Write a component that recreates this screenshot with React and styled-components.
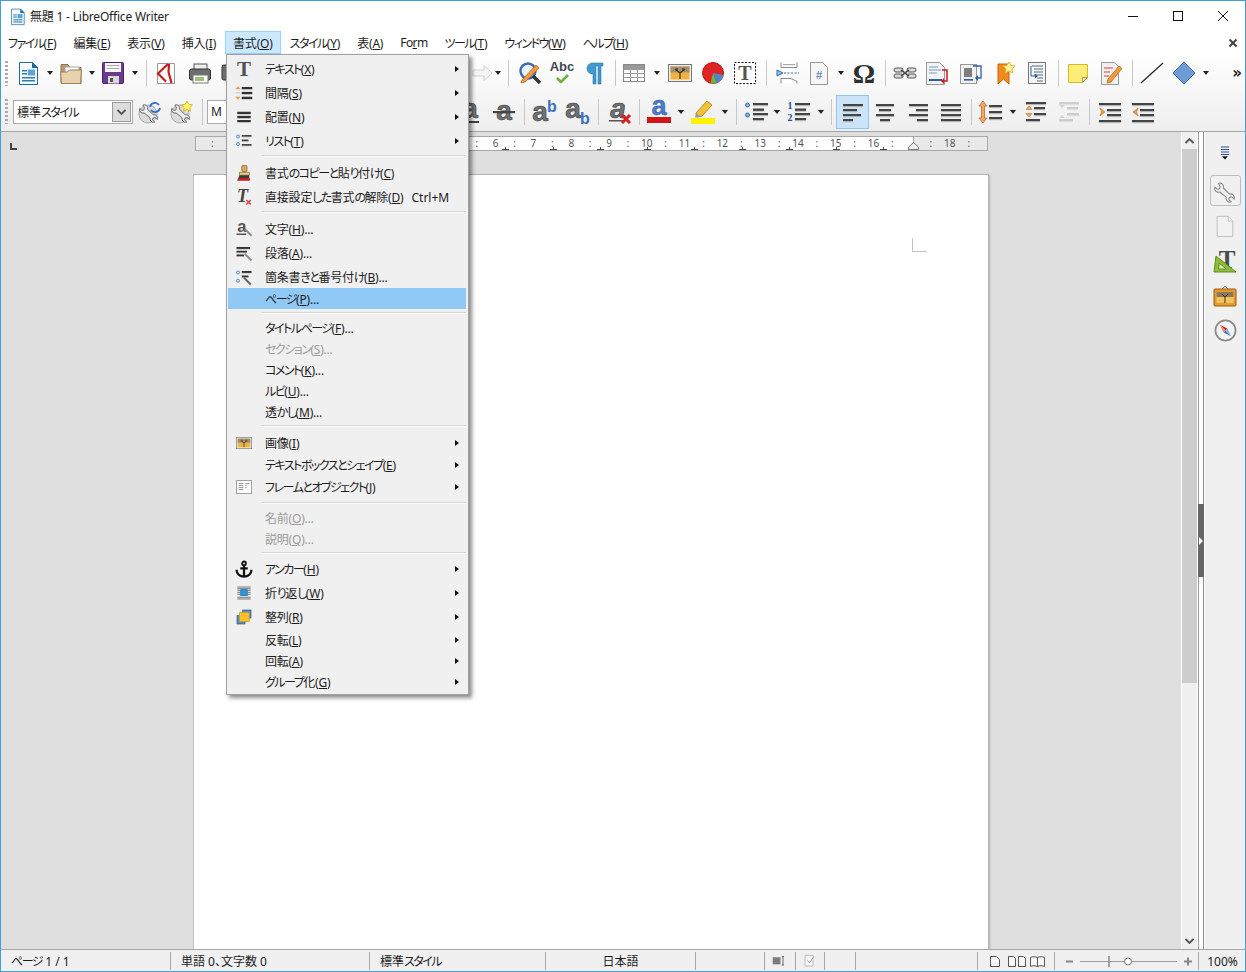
import React from 'react'
import styled, { createGlobalStyle } from 'styled-components'

const GlobalStyle = createGlobalStyle`
  html, body {
    margin: 0;
    padding: 0;
    background: #fff;
  }
  body {
    font-family: "Noto Sans", "Noto Sans CJK JP", sans-serif;
    font-size: 12px;
    font-feature-settings: "palt";
    color: #1c1c1c;
  }
`

const Window = styled.div`
  position: relative;
  box-sizing: border-box;
  width: 1246px;
  height: 972px;
  border: 1px solid #3f9fd8;
  display: flex;
  flex-direction: column;
  overflow: hidden;
  background: #fff;
`

const TitleBar = styled.div`
  height: 30px;
  display: flex;
  align-items: center;
  padding-left: 8px;
  flex: none;
`

const TitleText = styled.span`
  flex: 1;
  margin: 0 0 1px 4px;
  letter-spacing: -0.2px;
`

const WinButton = styled.div`
  width: 45px;
  height: 30px;
  display: flex;
  align-items: center;
  justify-content: center;
`

const MenuBar = styled.div`
  height: 23px;
  margin-left: -1.5px;
  display: flex;
  align-items: stretch;
  flex: none;
`

const MenuTitle = styled.div`
  box-sizing: border-box;
  display: flex;
  align-items: center;
  padding: 0 7.5px;
  white-space: nowrap;
  letter-spacing: -0.2px;
  border: 1px solid ${p => (p.$open ? '#99d1ff' : 'transparent')};
  background: ${p => (p.$open ? '#cce8ff' : 'transparent')};
`

const LatinTitle = styled.span`
  letter-spacing: -0.6px;
`

const DocClose = styled.div`
  margin-left: auto;
  width: 24px;
  display: flex;
  align-items: center;
  justify-content: center;
`

const ToolArea = styled.div`
  flex: none;
  background: linear-gradient(#ffffff, #eeeeee);
  border-bottom: 1px solid #a6a6a6;
`

const ToolRow = styled.div`
  height: ${p => p.$h}px;
  display: flex;
  align-items: center;
  padding-left: 4px;
`

const Grip = styled.div`
  width: 3px;
  height: 25px;
  margin-right: ${p => p.$mr}px;
  flex: none;
  background: repeating-linear-gradient(#aaaaaa 0 2px, transparent 2px 4px);
`

const Tool = styled.div`
  box-sizing: border-box;
  width: ${p => p.$w}px;
  height: ${p => (p.$active ? 34 : 30)}px;
  flex: none;
  display: flex;
  align-items: center;
  justify-content: center;
  background: ${p => (p.$active ? '#cce4f8' : 'transparent')};
  border: 1px solid ${p => (p.$active ? '#8fc6f2' : 'transparent')};
`

const DropArrow = styled.div`
  width: ${p => p.$w}px;
  flex: none;
  display: flex;
  justify-content: center;
  &::before {
    content: '';
    border-left: 3.5px solid transparent;
    border-right: 3.5px solid transparent;
    border-top: 4px solid #222;
  }
`

const ToolSep = styled.div`
  width: ${p => p.$w}px;
  height: 26px;
  flex: none;
  display: flex;
  justify-content: center;
  &::before {
    content: '';
    width: 1px;
    background: #c8c8c8;
  }
`

const Gap = styled.div`
  width: ${p => p.$w}px;
  flex: none;
`

const More = styled.div`
  margin-left: auto;
  margin-right: 3px;
  font: 700 15px "DejaVu Sans", sans-serif;
  text-align: right;
`

const Combo = styled.div`
  box-sizing: border-box;
  width: ${p => p.$w}px;
  height: 24px;
  flex: none;
  display: flex;
  align-items: center;
  padding-left: 3px;
  background: #fff;
  border: 1px solid #ababab;
`

const ComboText = styled.span`
  flex: 1;
`

const ComboButton = styled.div`
  box-sizing: border-box;
  width: 19px;
  height: 20px;
  margin-right: 1px;
  display: flex;
  align-items: center;
  justify-content: center;
  background: #dcdcdc;
  border: 1px solid #9a9a9a;
`

const Workspace = styled.div`
  flex: 1;
  min-height: 0;
  display: flex;
`

const DocColumn = styled.div`
  width: 1180px;
  flex: none;
  display: flex;
  flex-direction: column;
  background: #dfdfdf;
  border-right: 1px solid #fff;
`

const RulerRow = styled.div`
  box-sizing: border-box;
  height: 20px;
  flex: none;
  display: flex;
  align-items: flex-start;
  padding-top: 4px;
`

const RulerCorner = styled.div`
  width: 5px;
  height: 5px;
  margin: 7px 178px 0 9px;
  border-left: 2px solid #444;
  border-bottom: 2px solid #444;
  flex: none;
`

const Ruler = styled.div`
  position: relative;
  box-sizing: border-box;
  height: 15px;
  display: flex;
  border: 1px solid #a8a8a8;
  border-width: 1px 1px 1px 0;
  font: 10px "Noto Sans", sans-serif;
  color: #555;
`

const RulerGray = styled.div`
  box-sizing: border-box;
  width: 74px;
  display: flex;
  justify-content: ${p => (p.$end ? 'flex-end' : 'flex-start')};
  padding: ${p => (p.$end ? '0 9.45px 0 0' : '0 0 0 7.5px')};
  background: #e9e9e9;
  border-left: 1px solid #a8a8a8;
  overflow: hidden;
`

const RulerWhite = styled.div`
  position: relative;
  box-sizing: border-box;
  width: 644px;
  display: flex;
  padding-left: 9.45px;
  background: #fff;

  &::after {
    content: '';
    position: absolute;
    left: 0;
    right: 0;
    bottom: 0;
    height: 3px;
    background: repeating-linear-gradient(90deg, #444 0 1px, transparent 1px 47.25px);
  }
  &::before {
    content: '';
    position: absolute;
    left: 0;
    right: 0;
    bottom: 0;
    height: 1px;
    background: repeating-linear-gradient(90deg, #444 0 4px, transparent 4px 44.25px, #444 44.25px 47.25px);
  }
`

const RulerTick = styled.span`
  width: 18.9px;
  flex: none;
  text-align: center;
  line-height: 13px;
  white-space: nowrap;
`

const IndentMark = styled.svg`
  position: absolute;
  left: 639px;
  top: 1px;
`

const DocArea = styled.div`
  flex: 1;
  min-height: 0;
  overflow: hidden;
  padding: 22px 0 0 192px;
`

const Page = styled.div`
  position: relative;
  box-sizing: border-box;
  width: 796px;
  height: 1100px;
  background: #fff;
  border-top: 1px solid #b4b4b4;
  border-left: 1px solid #c4c4c4;
  border-right: 1px solid #b4b4b4;
  box-shadow: 1px 1px 2px rgba(0, 0, 0, 0.2);
`

const CropMark = styled.div`
  position: absolute;
  left: 718px;
  top: 63px;
  width: 14px;
  height: 13px;
  border-left: 1px solid #c4c4c4;
  border-bottom: 1px solid #c4c4c4;
`

const Scroll = styled.div`
  width: 15px;
  flex: none;
  display: flex;
  flex-direction: column;
  padding-top: 1px;
  background: #f0f0f0;
  border-right: 1px solid #fff;
`

const ScrollBtn = styled.div`
  height: 16px;
  flex: none;
  display: flex;
  align-items: center;
  justify-content: center;
`

const ScrollThumb = styled.div`
  height: 534px;
  flex: none;
  background: #cdcdcd;
`

const ScrollTrack = styled.div`
  flex: 1;
`

const DeckStrip = styled.div`
  width: 4px;
  flex: none;
  display: flex;
  flex-direction: column;
  border-left: 1px solid #9a9a9a;
  border-right: 1px solid #8c8c8c;
  padding-top: 372px;
  background: #fff;
`

const DeckHandle = styled.div`
  height: 73px;
  margin: 0 -1px;
  background: #666;
  display: flex;
  align-items: center;
  justify-content: center;
  &::before {
    content: '';
    border-left: 4px solid #fff;
    border-top: 4px solid transparent;
    border-bottom: 4px solid transparent;
  }
`

const SideBar = styled.div`
  flex: 1;
  background: #f0f0f0;
  border-left: 1px solid #fff;
  display: flex;
  flex-direction: column;
  align-items: center;
  padding-top: 8px;
`

const SideTab = styled.div`
  box-sizing: border-box;
  width: ${p => (p.$boxed ? 31 : 40)}px;
  height: ${p => p.$h}px;
  margin: ${p => p.$m || 0};
  flex: none;
  display: flex;
  align-items: center;
  justify-content: center;
  ${p => (p.$boxed ? 'border: 1px solid #bdbdbd; border-radius: 3px;' : '')}
`

const StatusBar = styled.div`
  box-sizing: border-box;
  height: 22px;
  padding-top: 1px;
  flex: none;
  display: flex;
  align-items: center;
  background: #f0f0f0;
  border-top: 1px solid #a6a6a6;
`

const StatusCell = styled.div`
  box-sizing: border-box;
  width: ${p => p.$w}px;
  height: 18px;
  flex: none;
  display: flex;
  align-items: center;
  justify-content: ${p => p.$align || 'flex-start'};
  padding-left: ${p => p.$pad || 0}px;
  border-right: ${p => (p.$last ? 'none' : '1px solid #a6a6a6')};
  white-space: pre;
`

const Menu = styled.div`
  position: absolute;
  left: 225px;
  top: 53px;
  box-sizing: border-box;
  width: 243px;
  padding: 2px;
  padding-left: 1px;
  background: #f0f0f0;
  border: 1px solid #a0a0a0;
  box-shadow: 3px 3px 4px rgba(0, 0, 0, 0.45);
`

const MenuRow = styled.div`
  height: ${p => p.$h}px;
  display: flex;
  align-items: center;
  letter-spacing: -0.2px;
  color: ${p => (p.$disabled ? '#9b9b9b' : 'inherit')};
  background: ${p => (p.$active ? '#90c8f6' : 'transparent')};
`

const MenuIcon = styled.div`
  width: 32px;
  margin-right: 5px;
  flex: none;
  display: flex;
  align-items: center;
  justify-content: center;
`

const Shortcut = styled.span`
  margin-left: 8px;
  letter-spacing: 0;
`

const SubArrow = styled.span`
  margin-left: auto;
  margin-right: 7px;
  border-left: 4px solid #111;
  border-top: 3px solid transparent;
  border-bottom: 3px solid transparent;
`

const MenuSep = styled.div`
  height: 1px;
  margin: ${p => p.$t}px 0 ${p => p.$b}px 33px;
  background: #d7d7d7;
  box-shadow: 0 1px 0 #fbfbfb;
`

const Kana = styled.span`
  letter-spacing: -1.5px;
`

const Glyph = styled.svg`
  display: block;
  flex: none;
  overflow: visible;
`

// the kana of the UI font are much narrower than the kanji
const Jp = ({ children }) =>
  children.split(/([\u3040-\u30ff]+)/).map((s, i) => (i % 2 ? <Kana key={i}>{s}</Kana> : s))

const T = ({ x = 12, y = 20, s = 22, f = '#555a5e', w = 700, fam = 'Liberation Sans', it, children, ...rest }) => (
  <text
    x={x}
    y={y}
    fontSize={s}
    fill={f}
    fontWeight={w}
    fontFamily={`"${fam}", sans-serif`}
    fontStyle={it ? 'italic' : 'normal'}
    textAnchor="middle"
    {...rest}
  >
    {children}
  </text>
)

const BigA = props => <T s={28} f="#6d7276" stroke="#3a3a3a" strokeWidth=".6" {...props}>a</T>

const bars = (rows, c = '#444', h = 2.4) =>
  rows.map(([x, y, w], i) => (
    <g key={i}>
      <rect x={x} y={y} width={w} height={h} fill={c} />
      <rect x={x} y={y + h} width={w} height={0.8} fill="#bbb" />
    </g>
  ))

const Wrench = ({ c = '#8c8c8c' }) => (
  <path
    d="M6 5a3.5 3.5 0 0 1 4.6 4.2l5.6 5.6a3.5 3.5 0 0 1 4.2 4.6l-2.4-2-2 .6-.5 2 2.2 2a3.5 3.5 0 0 1-4.6-4.3L7 12.9a3.5 3.5 0 0 1-4.4-4.5l2.3 2 2-.5.5-2z"
    fill="#eee"
    stroke={c}
  />
)

const icons = {
  newDoc: (
    <>
      <path d="M3.5 1.500h13l5 5v17h-18z" fill="#f6fafd" stroke="#1d6b9e" />
      <path d="M16 1l6 6h-6z" fill="#1d6b9e" />
      <rect x="6" y="9" width="5" height="1.5" fill="#2b7fb8" />
      <rect x="6" y="12" width="5" height="1.5" fill="#2b7fb8" />
      <rect x="12" y="8.5" width="7" height="6" fill="#5da5d6" />
      <rect x="6" y="16" width="13" height="1.5" fill="#2b7fb8" />
      <rect x="6" y="19" width="13" height="1.5" fill="#2b7fb8" />
    </>
  ),
  open: (
    <>
      <path d="M2 3.500h7l2 3h11v16H2z" fill="#b99a70" stroke="#8f7650" />
      <rect x="6" y="6" width="14" height="7" fill="#fff" stroke="#aaa" />
      <path d="M1.500 11h7l2-2h12l-1 13.500h-19z" fill="#e6d2ae" stroke="#9a8158" />
    </>
  ),
  save: (
    <>
      <rect x="1.5" y="1.5" width="21" height="21" rx="1" fill="#6a3a8c" stroke="#4a2266" />
      <rect x="4" y="2" width="16" height="9" fill="#f4f4f4" />
      <rect x="5.5" y="4" width="13" height="1" fill="#aaa" />
      <rect x="5.5" y="7" width="13" height="1" fill="#aaa" />
      <rect x="7" y="15" width="11" height="7.5" fill="#d8d8d8" />
      <rect x="9" y="17" width="3" height="4" fill="#555" />
    </>
  ),
  pdf: (
    <>
      <path d="M3.5 2.500h17v20h-17z" fill="#fff" stroke="#999" />
      <path d="M14 3L4 12.500l8 8M15 3l-.5 8 3 11" fill="none" stroke="#c61c1c" strokeWidth="2.2" />
    </>
  ),
  print: (
    <>
      <rect x="6" y="3" width="13" height="6" fill="#eee" stroke="#555" />
      <rect x="1.5" y="8" width="21" height="11" rx="2" fill="#6b6f72" stroke="#333" />
      <rect x="5" y="14" width="15" height="8" fill="#fff" stroke="#777" />
      <rect x="7" y="16" width="9" height="4" fill="#9cc27a" />
    </>
  ),
  preview: <rect x="2" y="4" width="20" height="15" rx="2" fill="#6b6f72" stroke="#333" />,
  redo: <path d="M2 9h11V4.500l8 7.500-8 7.500V15H2z" fill="#f4f4f4" stroke="#d2d2d2" />,
  find: (
    <>
      <circle cx="10" cy="10" r="7.500" fill="#eaf2fa" stroke="#3d67b8" strokeWidth="2.400" />
      <path d="M15 15l7 7" stroke="#333" strokeWidth="3.400" />
      <path d="M4 19L18 4l3 3L7 21l-4 1z" fill="#ef9a3c" stroke="#b96a18" strokeWidth=".8" />
    </>
  ),
  abc: (
    <>
      <T x={12} y={10} s={13} f="#3f4a52">Abc</T>
      <path d="M7 17l4 4 7-7" fill="none" stroke="#6eb23a" strokeWidth="2.600" />
    </>
  ),
  pilcrow: (
    <path
      d="M10 2h10v3h-2v18h-3V5h-2v18h-3V13C6 13 4 10.500 4 7.500S6 2 10 2z"
      fill="#3f9ad0"
      stroke="#1d6b9e"
      strokeWidth=".5"
    />
  ),
  table: (
    <>
      <rect x="1.500" y="3.500" width="21" height="17" fill="#fafafa" stroke="#888" />
      <rect x="2" y="4" width="20" height="4" fill="#999" />
      <path d="M1.500 8.500h21M1.500 12.500h21M1.500 16.500h21M8.500 3.500v17M15.500 3.500v17" stroke="#999" fill="none" />
    </>
  ),
  image: (
    <>
      <rect x=".5" y="3.500" width="23" height="17" fill="#eee" stroke="#777" />
      <rect x="2.500" y="5.500" width="19" height="13" fill="#f2b23e" />
      <rect x="2.500" y="5.500" width="19" height="6" fill="#a09070" />
      <path d="M12 18v-6l-5-4M12 12l5-4M9 9.500V7M15 9.500V7" stroke="#3a2a18" strokeWidth="1.100" fill="none" />
    </>
  ),
  chart: (
    <>
      <circle cx="12" cy="12" r="10.500" fill="#e02424" stroke="#b01818" />
      <path d="M12 12l10.500 2a10.500 10.500 0 0 1-7 8z" fill="#4f86c6" />
      <path d="M12 12l3.500 10a10.500 10.500 0 0 1-6 .2z" fill="#6db33f" />
    </>
  ),
  textbox: (
    <>
      <rect x="1.500" y="1.500" width="21" height="21" fill="#fff" stroke="#111" strokeDasharray="2 1.500" />
      <T x={12} y={19} s={20} f="#555" fam="Liberation Serif">T</T>
    </>
  ),
  pageBreak: (
    <>
      <path d="M5 1.500v5h16v-5M5 22.500v-5h10l6 3v2" fill="#fff" stroke="#888" />
      <rect x="7" y="3" width="12" height="1.200" fill="#aaa" />
      <path d="M1 9l6 3-6 3z" fill="#8cc0e8" stroke="#2f6fb0" />
      <path d="M8 12h15" stroke="#2f6fb0" strokeDasharray="2 1.500" />
    </>
  ),
  field: (
    <>
      <path d="M3.500 1.500h12l5 5v17h-17z" fill="#f6f6f6" stroke="#999" />
      <T x={12} y={18} s={11} f="#2b5fa8" w={400}>#</T>
    </>
  ),
  omega: <T x={12} y={22} s={28} f="#2c2f31" fam="Liberation Serif">Ω</T>,
  link: (
    <>
      <rect x="1" y="7" width="9" height="4" rx="2" fill="#ddd" stroke="#555" />
      <rect x="14" y="7" width="9" height="4" rx="2" fill="#ddd" stroke="#555" />
      <rect x="1" y="13" width="9" height="4" rx="2" fill="#ddd" stroke="#555" />
      <rect x="14" y="13" width="9" height="4" rx="2" fill="#ddd" stroke="#555" />
      <path d="M8 9l8 6M8 15l8-6" stroke="#555" strokeWidth="1.600" />
    </>
  ),
  footnote: (
    <>
      <path d="M1.500 1.500h13l5 5v17h-18z" fill="#f4f4f4" stroke="#999" />
      <path d="M4 6h9M4 9h12M4 12h8" stroke="#7a9cc0" />
      <rect x="4" y="18" width="13" height="2" fill="#2b5fa8" />
      <path d="M17 9h5v11h-4" fill="none" stroke="#d01818" strokeWidth="1.500" />
      <path d="M19 17l-3 3 3 3z" fill="#d01818" />
    </>
  ),
  endnote: (
    <>
      <rect x="1.500" y="3.500" width="16" height="19" fill="#f0f0f0" stroke="#999" />
      <rect x="5" y="7" width="8" height="9" fill="#7d7d7d" />
      <rect x="5" y="18" width="9" height="1.600" fill="#2b5fa8" />
      <path d="M14 5h8v12h-4" fill="none" stroke="#2b5fa8" strokeWidth="1.300" />
      <path d="M19 14l-3 3 3 3z" fill="#2b5fa8" />
    </>
  ),
  bookmark: (
    <>
      <path d="M5 3h11v20l-5.500-5L5 23z" fill="#f08a1e" stroke="#c9650c" />
      <path d="M16 1l2 3.500 4 .5-3 3 .8 4-3.800-2-3.800 2 .8-4-3-3 4-.5z" fill="#fff3a8" stroke="#e8b820" />
    </>
  ),
  crossref: (
    <>
      <rect x="3.500" y="1.500" width="17" height="21" fill="#f4f6f8" stroke="#777" />
      <path d="M7 5h11M9 8h9M9 11h9M9 14h9M12 17h6M12 20h6" stroke="#5a6a7a" />
      <path d="M6 5v10M6 15h5" stroke="#2b5fa8" fill="none" />
      <path d="M10 12.500l3 2.500-3 2.500z" fill="#2b5fa8" />
    </>
  ),
  note: (
    <>
      <path d="M2.500 3.500h19v13l-5 5h-14z" fill="#fdee7a" stroke="#d4b82a" />
      <path d="M21.500 16.500h-5v5z" fill="#e9e4b8" stroke="#b0a040" />
    </>
  ),
  track: (
    <>
      <path d="M2.500 1.500h13l4 4v18h-17z" fill="#f0f0f0" stroke="#999" />
      <path d="M5 7h9M5 11h6M5 15h5" stroke="#d83c3c" />
      <path d="M8 22l1-4L20 5l3 2.500L12 21z" fill="#ee9b3a" stroke="#b96a18" strokeWidth=".8" />
    </>
  ),
  line: <path d="M1 22L23 2" stroke="#222" strokeWidth="1.200" />,
  diamond: <path d="M12 1l11 11-11 11L1 12z" fill="#6f9bd4" stroke="#3d6eb0" />,
  updateStyle: (
    <>
      <circle cx="11" cy="14" r="9" fill="#dcdcdc" stroke="#aaa" />
      <Wrench c="#6a6a6a" />
      <path d="M13 7a5 5 0 0 1 9-2M23 8a5 5 0 0 1-9 2" fill="none" stroke="#2f6fc4" strokeWidth="1.800" />
    </>
  ),
  newStyle: (
    <>
      <circle cx="11" cy="14" r="9" fill="#dcdcdc" stroke="#aaa" />
      <Wrench c="#6a6a6a" />
      <path d="M18 1l1.800 3.300 3.700.6-2.700 2.600.6 3.700-3.400-1.700-3.400 1.700.6-3.700-2.700-2.600 3.700-.6z" fill="#fff36a" stroke="#d8b820" />
    </>
  ),
  underA: (
    <>
      <BigA x={12} y={18} />
      <rect x="3" y="21" width="18" height="2" fill="#444" />
    </>
  ),
  strikeA: (
    <>
      <BigA x={12} y={20} />
      <rect x="1" y="11" width="22" height="2.200" fill="#444" />
    </>
  ),
  sup: (
    <>
      <BigA x={8} y={21} />
      <T x={20} y={12} s={16} f="#3a6fc0">b</T>
    </>
  ),
  sub: (
    <>
      <BigA x={8} y={18} />
      <T x={20} y={24} s={16} f="#3a6fc0">b</T>
    </>
  ),
  clear: (
    <>
      <BigA x={10} y={18} it />
      <rect x="1" y="20" width="16" height="1.500" fill="#555" />
      <path d="M14 15l8 8M22 15l-8 8" stroke="#d81e1e" strokeWidth="3" />
    </>
  ),
  fontColor: (
    <>
      <T x={12} y={15} s={27} f="#4a7cc8" stroke="#2f5fa8" strokeWidth=".5">a</T>
      <rect y="17" width="24" height="6" fill="#d01616" />
    </>
  ),
  highlight: (
    <>
      <path d="M5 13L16 1l5 4-10 11-5 1z" fill="#f2c23c" stroke="#b98e18" />
      <path d="M5 13l5 4-6 .5z" fill="#999" />
      <rect y="18" width="24" height="6" fill="#fff200" />
    </>
  ),
  bullets: (
    <>
      <circle cx="3.500" cy="5" r="2" fill="#8ab4e0" stroke="#2f6fb0" />
      <circle cx="3.500" cy="15" r="2" fill="#8ab4e0" stroke="#2f6fb0" />
      {bars([[9, 3, 15], [9, 8.5, 11], [9, 13, 15], [9, 18, 11]])}
    </>
  ),
  numbering: (
    <>
      <T x={4} y={9} s={10} f="#24508f" fam="Liberation Serif">1</T>
      <T x={4} y={21} s={10} f="#24508f" fam="Liberation Serif">2</T>
      {bars([[9, 3, 15], [9, 8.5, 11], [9, 13, 15], [9, 18, 11]])}
    </>
  ),
  alignLeft: <>{bars([[2, 4, 20], [2, 9, 14], [2, 14, 18], [2, 19, 10]])}</>,
  alignCenter: <>{bars([[3, 4, 18], [6, 9, 12], [3, 14, 18], [7, 19, 10]])}</>,
  alignRight: <>{bars([[3, 4, 19], [10, 9, 12], [3, 14, 19], [11, 19, 11]])}</>,
  justify: <>{bars([[2, 4, 20], [2, 9, 20], [2, 14, 20], [2, 19, 20]])}</>,
  lineSpacing: (
    <>
      <path d="M5 1l4 5H6.500v12H9l-4 5-4-5h2.500V6H1z" fill="#f0a868" stroke="#c46a1c" strokeWidth=".8" />
      {bars([[11, 5, 13], [11, 11, 13], [11, 17, 13]])}
    </>
  ),
  paraInc: (
    <>
      {bars([[2, 2, 20], [10, 7, 11], [10, 13, 12], [2, 19, 14]])}
      <path d="M5 6l3 3.500H2zM5 17l3-3.500H2z" fill="#f0a868" stroke="#c46a1c" strokeWidth=".6" />
    </>
  ),
  paraDec: (
    <g opacity=".35">
      {bars([[2, 2, 20], [10, 7, 11], [10, 13, 12], [2, 19, 14]], '#888')}
      <path d="M5 8l3-3H2zM5 15l3 3H2z" fill="#999" />
    </g>
  ),
  indent: (
    <>
      {bars([[1, 3, 22], [9, 9, 14], [9, 14, 14], [1, 20, 22]])}
      <path d="M2 8l5 4-5 4 1.500-4z" fill="#f09a3c" stroke="#c46a1c" strokeWidth=".6" />
    </>
  ),
  outdent: (
    <>
      {bars([[1, 3, 22], [9, 9, 14], [9, 14, 14], [1, 20, 22]])}
      <path d="M7 8l-5 4 5 4-1.500-4z" fill="#f09a3c" stroke="#c46a1c" strokeWidth=".6" />
    </>
  ),
  menuT: <T x={12} y={21} s={28} f="#4d5356" fam="Liberation Serif">T</T>,
  menuSpacing: (
    <>
      {bars([[9, 4, 14], [9, 10.5, 14], [9, 17, 14]], '#333', 3)}
      <path d="M4 3l3.500 4h-7zM4 21l3.500-4h-7z" fill="#f09a3c" />
      <rect x="1" y="11" width="6" height="1.500" fill="#c9c9c9" />
    </>
  ),
  menuAlign: <>{bars([[3, 5, 18], [3, 10.5, 18], [3, 16, 18]], '#333', 3)}</>,
  menuList: (
    <>
      <circle cx="4" cy="6" r="2" fill="#dfeaf6" stroke="#2f6fb0" />
      <circle cx="4" cy="16" r="2" fill="#dfeaf6" stroke="#2f6fb0" />
      {bars([[9, 4, 13], [9, 10, 9], [9, 16, 13]])}
    </>
  ),
  brush: (
    <>
      <rect x="9" y="2" width="7" height="8" rx="1.500" fill="#d6a860" stroke="#8a6424" />
      <path d="M6 11h13v4H6z" fill="#e8c88c" stroke="#8a6424" />
      <path d="M3 22l3-7h13v7z" fill="#3a3a3a" />
      <path d="M3 22l2-3h15v3z" fill="#d82020" />
    </>
  ),
  tx: (
    <>
      <T x={10} y={19} s={24} f="#444" fam="Liberation Serif" it>T</T>
      <path d="M15 16l6 6M21 16l-6 6" stroke="#e04040" strokeWidth="2" />
    </>
  ),
  menuChar: (
    <>
      <T x={9} y={16} s={22} f="#555">a</T>
      <rect x="2" y="18" width="13" height="2" fill="#555" />
      <path d="M13 12l9 9" stroke="#8c8c8c" strokeWidth="2.500" />
    </>
  ),
  menuPara: (
    <>
      {bars([[2, 4, 18], [2, 9, 14], [2, 14, 10]], '#333', 2.6)}
      <path d="M13 13l9 9" stroke="#8c8c8c" strokeWidth="2.500" />
    </>
  ),
  menuBullets: (
    <>
      <circle cx="4" cy="6" r="2" fill="#dfeaf6" stroke="#2f6fb0" />
      <circle cx="4" cy="17" r="2" fill="#dfeaf6" stroke="#2f6fb0" />
      {bars([[9, 4, 13], [9, 10, 9]], '#333', 2.6)}
      <path d="M12 13l9 9" stroke="#666" strokeWidth="2.500" />
    </>
  ),
  frame: (
    <>
      <rect x=".5" y="2.500" width="23" height="19" fill="#fff" stroke="#777" />
      <path d="M4 7h7M4 10h7M4 13h7M4 16h7M14 7h6M14 10h2M14 13h2" stroke="#555" />
    </>
  ),
  anchor: (
    <>
      <circle cx="12" cy="4.500" r="2.500" fill="none" stroke="#111" strokeWidth="2.400" />
      <path d="M12 7v15M7 11h10" stroke="#111" strokeWidth="3" />
      <path d="M2 13c0 6 5 9 10 9s10-3 10-9" fill="none" stroke="#111" strokeWidth="3" />
    </>
  ),
  wrap: (
    <>
      <path d="M2 3h20M2 5.500h20M2 18.500h20M2 21h20M2 8h4M2 11h4M2 14h4M18 8h4M18 11h4M18 14h4" stroke="#3a3a3a" />
      <rect x="7" y="7" width="10" height="9" fill="#2b93dc" stroke="#1d6b9e" />
    </>
  ),
  arrange: (
    <>
      <rect x="1.500" y="10" width="12" height="12.500" fill="#5a89c8" stroke="#24508f" />
      <rect x="10" y="1.500" width="12.500" height="12" fill="#5a89c8" stroke="#24508f" />
      <rect x="5" y="5" width="15" height="14" rx="1" fill="#f8c22c" stroke="#b98e18" />
    </>
  ),
  sideMenu: (
    <>
      <path d="M7 6h10M7 9h10M7 12h10M7 15h10" stroke="#2f4f8f" strokeWidth="1.400" />
      <path d="M12 21l-3.500-4h7z" fill="#111" />
    </>
  ),
  sideWrench: <Wrench c="#8a8a8a" />,
  sidePage: (
    <>
      <path d="M3.500 1.500h12l5 5v17h-17z" fill="#f2f2f2" stroke="#bcbcbc" />
      <path d="M15.500 1.500v5h5" fill="#fff" stroke="#bcbcbc" />
    </>
  ),
  sideT: (
    <>
      <T x={14} y={19} s={25} f="#4a4a4a" fam="Liberation Serif">T</T>
      <path d="M1 23L3 7l20 16z" fill="#8fbc3c" stroke="#5f8f1c" />
      <path d="M5.500 20l.7-6 7 6z" fill="#dcebb8" stroke="#5f8f1c" />
    </>
  ),
  sideGallery: (
    <>
      <path d="M9 5l3-3 3 3" fill="none" stroke="#777" />
      <rect x="1" y="5" width="22" height="17" rx="1" fill="#e69a2c" stroke="#9c5a10" />
      <rect x="3.500" y="8" width="17" height="11" fill="#f2c25c" />
      <rect x="3.500" y="8" width="17" height="5" fill="#8a7a5c" />
      <path d="M12 19v-6l-3-3M12 13l3-3" stroke="#3a2a18" fill="none" />
    </>
  ),
  compass: (
    <>
      <circle cx="12" cy="12" r="10.500" fill="#f4f4f4" stroke="#8a8a8a" strokeWidth="1.800" />
      <path d="M6 6l8 4-2 2z" fill="#d82020" />
      <path d="M18 18l-8-4 2-2z" fill="#3a6fc0" />
      <path d="M6 6l4 8 2-2z" fill="#f08080" />
      <path d="M18 18l-4-8-2 2z" fill="#8fb0e0" />
    </>
  ),
  insertMode: (
    <>
      <rect x="1" y="6" width="11" height="10" fill="#7d7d7d" />
      <path d="M14 5h3M14 17h3M15.500 5v12" stroke="#333" />
    </>
  ),
  signature: (
    <>
      <path d="M4.500 3.500h12v16h-12z" fill="#f6f6f6" stroke="#a0a0a0" />
      <path d="M8 11l3 4 7-10" fill="none" stroke="#a8a8a8" strokeWidth="1.400" />
    </>
  ),
}

const Icon = ({ n, size = 24 }) => (
  <Glyph width={size} height={size} viewBox="0 0 24 24">
    {icons[n]}
  </Glyph>
)

const Chevron = ({ up, c = '#555' }) => (
  <Glyph width="9" height="6" viewBox="0 0 9 6">
    <path d={up ? 'M.5 5l4-4 4 4' : 'M.5 1l4 4 4-4'} fill="none" stroke={c} strokeWidth="1.800" />
  </Glyph>
)

const topRow = [
  ['newDoc', 26], ['arrow', 18], ['open', 24], ['arrow', 18], ['save', 24], ['arrow', 20], ['sep', 2],
  ['pdf', 38], ['print', 30], ['preview', 34], ['gap', 222], ['redo', 24], ['arrow', 6], ['sep', 14],
  ['find', 30], ['abc', 34], ['pilcrow', 32], ['sep', 8], ['table', 30], ['arrow', 16], ['image', 30],
  ['chart', 36], ['textbox', 28], ['sep', 14], ['pageBreak', 30], ['field', 32], ['arrow', 12], ['omega', 34],
  ['sep', 8], ['link', 32], ['footnote', 32], ['endnote', 36], ['bookmark', 32], ['crossref', 32], ['sep', 10],
  ['note', 30], ['track', 36], ['sep', 6], ['line', 34], ['diamond', 30], ['arrow', 14],
]

const formatRow = [
  ['updateStyle', 32], ['newStyle', 32], ['sep', 10], ['combo', 200], ['gap', 49], ['underA', 28], ['strikeA', 39],
  ['sep', 2], ['sup', 38], ['sub', 28], ['sep', 14], ['clear', 30], ['sep', 8], ['fontColor', 32], ['arrow', 12],
  ['highlight', 32], ['arrow', 12], ['sep', 10], ['bullets', 30], ['arrow', 12], ['numbering', 30], ['arrow', 16],
  ['sep', 4], ['gap', 3], ['alignLeft', 33, true], ['alignCenter', 32], ['alignRight', 34], ['justify', 32],
  ['sep', 8], ['lineSpacing', 30], ['arrow', 16], ['paraInc', 30], ['paraDec', 36], ['sep', 4], ['indent', 38],
  ['outdent', 28],
]

const renderTools = row =>
  row.map(([n, w, active], i) => {
    if (n === 'arrow') return <DropArrow key={i} $w={w} />
    if (n === 'sep') return <ToolSep key={i} $w={w} />
    if (n === 'gap') return <Gap key={i} $w={w} />
    if (n === 'combo') return <Combo key={i} $w={w}>M</Combo>
    return (
      <Tool key={i} $w={w} $active={active}>
        <Icon n={n} />
      </Tool>
    )
  })

const menus = [
  ['ファイル', 'F'], ['編集', 'E'], ['表示', 'V'], ['挿入', 'I'], ['書式', 'O'], ['スタイル', 'Y'],
  ['表', 'A'], ['Form'], ['ツール', 'T'], ['ウィンドウ', 'W'], ['ヘルプ', 'H'],
]

const Acc = ({ t, k, dots }) => (
  <span>
    <Jp>{t}</Jp>(<u>{k}</u>){dots ? '...' : ''}
  </span>
)

const formatMenu = [
  { t: 'テキスト', k: 'X', i: 'menuT', h: 24, sub: true },
  { t: '間隔', k: 'S', i: 'menuSpacing', h: 24, sub: true },
  { t: '配置', k: 'N', i: 'menuAlign', h: 24, sub: true },
  { t: 'リスト', k: 'T', i: 'menuList', h: 24, sub: true },
  { sep: [2, 5] },
  { t: '書式のコピーと貼り付け', k: 'C', i: 'brush', h: 24 },
  { t: '直接設定した書式の解除', k: 'D', i: 'tx', h: 24, key: 'Ctrl+M' },
  { sep: [2, 5] },
  { t: '文字', k: 'H', i: 'menuChar', h: 24, dots: true },
  { t: '段落', k: 'A', i: 'menuPara', h: 24, dots: true },
  { t: '箇条書きと番号付け', k: 'B', i: 'menuBullets', h: 23, dots: true },
  { t: 'ページ', k: 'P', h: 21, dots: true, active: true },
  { sep: [3, 4] },
  { t: 'タイトルページ', k: 'F', h: 21, dots: true },
  { t: 'セクション', k: 'S', h: 21, dots: true, off: true },
  { t: 'コメント', k: 'K', h: 21, dots: true },
  { t: 'ルビ', k: 'U', h: 21, dots: true },
  { t: '透かし', k: 'M', h: 21, dots: true },
  { sep: [3, 5] },
  { t: '画像', k: 'I', i: 'image', h: 23, sub: true, sm: true },
  { t: 'テキストボックスとシェイプ', k: 'E', h: 22, sub: true },
  { t: 'フレームとオブジェクト', k: 'J', i: 'frame', h: 22, sub: true, sm: true },
  { sep: [4, 4] },
  { t: '名前', k: 'O', h: 21, dots: true, off: true },
  { t: '説明', k: 'Q', h: 21, dots: true, off: true },
  { sep: [3, 4] },
  { t: 'アンカー', k: 'H', i: 'anchor', h: 24, sub: true },
  { t: '折り返し', k: 'W', i: 'wrap', h: 24, sub: true, sm: true },
  { t: '整列', k: 'R', i: 'arrange', h: 24, sub: true, sm: true },
  { t: '反転', k: 'L', h: 21, sub: true },
  { t: '回転', k: 'A', h: 21, sub: true },
  { t: 'グループ化', k: 'G', h: 21, sub: true },
]

const tickLabel = i => (i % 2 === 0 ? i / 2 : ':')

export default function App() {
  return (
    <>
      <GlobalStyle />
      <Window>
        <TitleBar>
          <Icon n="newDoc" size={17} />
          <TitleText>無題 1 - LibreOffice Writer</TitleText>
          <WinButton>
            <Glyph width="10" height="10" viewBox="0 0 10 10">
              <path d="M0 5.500h10" stroke="#111" />
            </Glyph>
          </WinButton>
          <WinButton>
            <Glyph width="10" height="10" viewBox="0 0 10 10">
              <rect x=".5" y=".5" width="9" height="9" fill="none" stroke="#111" />
            </Glyph>
          </WinButton>
          <WinButton>
            <Glyph width="10" height="10" viewBox="0 0 10 10">
              <path d="M0 0l10 10M10 0L0 10" stroke="#111" />
            </Glyph>
          </WinButton>
        </TitleBar>

        <MenuBar>
          {menus.map(([t, k]) => (
            <MenuTitle key={t} $open={t === '書式'}>
              {k ? <Acc t={t} k={k} /> : <LatinTitle>Fo<u>r</u>m</LatinTitle>}
            </MenuTitle>
          ))}
          <DocClose>
            <Glyph width="8" height="8" viewBox="0 0 8 8">
              <path d="M.5.500l7 7M7.500.500l-7 7" stroke="#444" strokeWidth="2" />
            </Glyph>
          </DocClose>
        </MenuBar>

        <ToolArea>
          <ToolRow $h={38}>
            <Grip $mr={7} />
            {renderTools(topRow)}
            <More>»</More>
          </ToolRow>
          <ToolRow $h={39}>
            <Grip $mr={1} />
            <Gap $w={4} />
            <Combo $w={120}>
              <ComboText><Jp>標準スタイル</Jp></ComboText>
              <ComboButton>
                <Chevron />
              </ComboButton>
            </Combo>
            {renderTools(formatRow)}
          </ToolRow>
        </ToolArea>

        <Workspace>
          <DocColumn>
            <RulerRow>
              <RulerCorner />
              <Ruler>
                <RulerGray $end>
                  {[':', '1', ':'].map((t, i) => (
                    <RulerTick key={i}>{t}</RulerTick>
                  ))}
                </RulerGray>
                <RulerWhite>
                  {Array.from({ length: 33 }, (_, n) => (
                    <RulerTick key={n}>{tickLabel(n + 1)}</RulerTick>
                  ))}
                  <IndentMark width="12" height="12" viewBox="0 0 12 12">
                    <path d="M.5 11.500h10V9L5.500 4.500.5 9z" fill="#eee" stroke="#777" />
                  </IndentMark>
                </RulerWhite>
                <RulerGray>
                  {[':', '18', ':'].map((t, i) => (
                    <RulerTick key={i}>{t}</RulerTick>
                  ))}
                </RulerGray>
              </Ruler>
            </RulerRow>
            <DocArea>
              <Page>
                <CropMark />
              </Page>
            </DocArea>
          </DocColumn>

          <Scroll>
            <ScrollBtn>
              <Chevron up />
            </ScrollBtn>
            <ScrollThumb />
            <ScrollTrack />
            <ScrollBtn>
              <Chevron />
            </ScrollBtn>
          </Scroll>

          <DeckStrip>
            <DeckHandle />
          </DeckStrip>

          <SideBar>
            <SideTab $h={24}>
              <Icon n="sideMenu" size={20} />
            </SideTab>
            <SideTab $h={31} $boxed $m="11px 0 2px">
              <Icon n="sideWrench" size={26} />
            </SideTab>
            <SideTab $h={35}>
              <Icon n="sidePage" size={22} />
            </SideTab>
            <SideTab $h={35}>
              <Icon n="sideT" size={24} />
            </SideTab>
            <SideTab $h={35}>
              <Icon n="sideGallery" size={24} />
            </SideTab>
            <SideTab $h={35}>
              <Icon n="compass" size={23} />
            </SideTab>
          </SideBar>
        </Workspace>

        <StatusBar>
          <StatusCell $w={170} $pad={10}><Jp>ページ 1 / 1</Jp></StatusCell>
          <StatusCell $w={199} $pad={10}>単語 0、文字数 0</StatusCell>
          <StatusCell $w={176} $pad={10}><Jp>標準スタイル</Jp></StatusCell>
          <StatusCell $w={150} $align="center">日本語</StatusCell>
          <StatusCell $w={69} />
          <StatusCell $w={31} $align="center">
            <Icon n="insertMode" size={17} />
          </StatusCell>
          <StatusCell $w={29} $align="center">
            <Icon n="signature" size={16} />
          </StatusCell>
          <StatusCell $w={31} />
          <StatusCell $w={122} />
          <StatusCell $w={77} $align="center">
            <Glyph width="62" height="14" viewBox="0 0 62 14">
              <path d="M5.500 2.500h6l3 3v7h-9zM23.500 2.500h5l2 2v8h-7zM33.500 2.500h5l2 2v8h-7zM45.500 3.500c2-1 5-1 7 0v9c-2-1-5-1-7 0zM52.500 3.500c2-1 5-1 7 0v9c-2-1-5-1-7 0z" fill="#f8f8f8" stroke="#555" />
            </Glyph>
          </StatusCell>
          <StatusCell $w={144} $pad={8}>
            <Glyph width="130" height="14" viewBox="0 0 130 14">
              <path d="M3 7.500h7" stroke="#888" strokeWidth="2" />
              <path d="M17 7.500h97" stroke="#9a9a9a" />
              <path d="M46 2v11" stroke="#888" strokeWidth="1.500" />
              <circle cx="65" cy="7.500" r="3.500" fill="#fff" stroke="#777" />
              <path d="M121 7.500h8M125 3.500v8" stroke="#888" strokeWidth="2" />
            </Glyph>
          </StatusCell>
          <StatusCell $w={47} $align="center" $last>100%</StatusCell>
        </StatusBar>

        <Menu>
          {formatMenu.map((m, i) =>
            m.sep ? (
              <MenuSep key={i} $t={m.sep[0]} $b={m.sep[1]} />
            ) : (
              <MenuRow key={i} $h={m.h} $active={m.active} $disabled={m.off}>
                <MenuIcon>{m.i && <Icon n={m.i} size={m.sm ? 16 : 18} />}</MenuIcon>
                <Acc t={m.t} k={m.k} dots={m.dots} />
                {m.key && <Shortcut>{m.key}</Shortcut>}
                {m.sub && <SubArrow />}
              </MenuRow>
            )
          )}
        </Menu>
      </Window>
    </>
  )
}
